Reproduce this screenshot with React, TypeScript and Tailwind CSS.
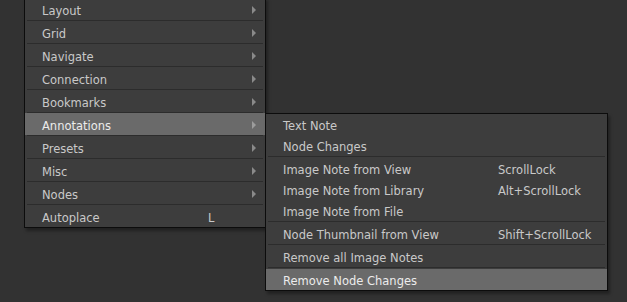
import React from "react";

type Item = { label: string; shortcut?: string; sub?: boolean; active?: boolean };

const mainItems: Item[] = [
  { label: "Layout", sub: true },
  { label: "Grid", sub: true },
  { label: "Navigate", sub: true },
  { label: "Connection", sub: true },
  { label: "Bookmarks", sub: true },
  { label: "Annotations", sub: true, active: true },
  { label: "Presets", sub: true },
  { label: "Misc", sub: true },
  { label: "Nodes", sub: true },
  { label: "Autoplace", shortcut: "L" },
];

// groups are split by separator lines
const subGroups: Item[][] = [
  [{ label: "Text Note" }, { label: "Node Changes" }],
  [
    { label: "Image Note from View", shortcut: "ScrollLock" },
    { label: "Image Note from Library", shortcut: "Alt+ScrollLock" },
    { label: "Image Note from File" },
  ],
  [{ label: "Node Thumbnail from View", shortcut: "Shift+ScrollLock" }],
  [{ label: "Remove all Image Notes" }],
  [{ label: "Remove Node Changes", active: true }],
];

function Arrow({ active }: { active?: boolean }) {
  return (
    <svg width="4" height="8" viewBox="0 0 4 8" className="shrink-0 mt-[2px]">
      <path d="M0 0 L4 4 L0 8 Z" fill={active ? "#9c9c9c" : "#8a8a8a"} />
    </svg>
  );
}

function MainRow({ item, last }: { item: Item; last: boolean }) {
  return (
    <div>
      <div
        className={
          "h-[22px] flex items-center pl-[17px] pr-[9px] " +
          (item.active ? "bg-[#6a6a6a] text-[#ececec]" : "text-[#c9c9c9]")
        }
      >
        <span className="w-[166px] pt-[6px]">{item.label}</span>
        <span className="flex-1 pt-[6px]">{item.shortcut}</span>
        {item.sub && <Arrow active={item.active} />}
      </div>
      {!last && <div className="h-px mx-[2px] bg-[#2c2c2c]" />}
    </div>
  );
}

function SubRow({ item }: { item: Item }) {
  return (
    <div
      className={
        "h-[21px] flex items-center pl-[17px] " +
        (item.active ? "bg-[#6a6a6a] text-[#ececec]" : "text-[#c9c9c9]")
      }
    >
      <span className="w-[215px] pt-[4px]">{item.label}</span>
      <span className="pt-[4px]">{item.shortcut}</span>
    </div>
  );
}

export default function App() {
  return (
    <div
      className="relative w-[627px] h-[302px] overflow-hidden bg-[#323232] text-[11.5px] leading-none"
      style={{ fontFamily: '"DejaVu Sans", Verdana, sans-serif' }}
    >
      <div className="absolute left-[24px] top-[-3px] w-[242px] bg-[#3d3d3d] border border-[#0c0c0c] shadow-[2px_3px_3px_rgba(0,0,0,0.35)]">
        {mainItems.map((it, i) => (
          <MainRow key={it.label} item={it} last={i === mainItems.length - 1} />
        ))}
      </div>

      <div className="absolute left-[265px] top-[113px] w-[343px] bg-[#3d3d3d] border border-[#0c0c0c] shadow-[2px_3px_3px_rgba(0,0,0,0.35)]">
        {subGroups.map((group, gi) => (
          <div key={gi}>
            {gi > 0 && <div className="h-px mx-[2px] mb-px bg-[#2c2c2c]" />}
            {group.map((it) => (
              <SubRow key={it.label} item={it} />
            ))}
          </div>
        ))}
      </div>
    </div>
  );
}
